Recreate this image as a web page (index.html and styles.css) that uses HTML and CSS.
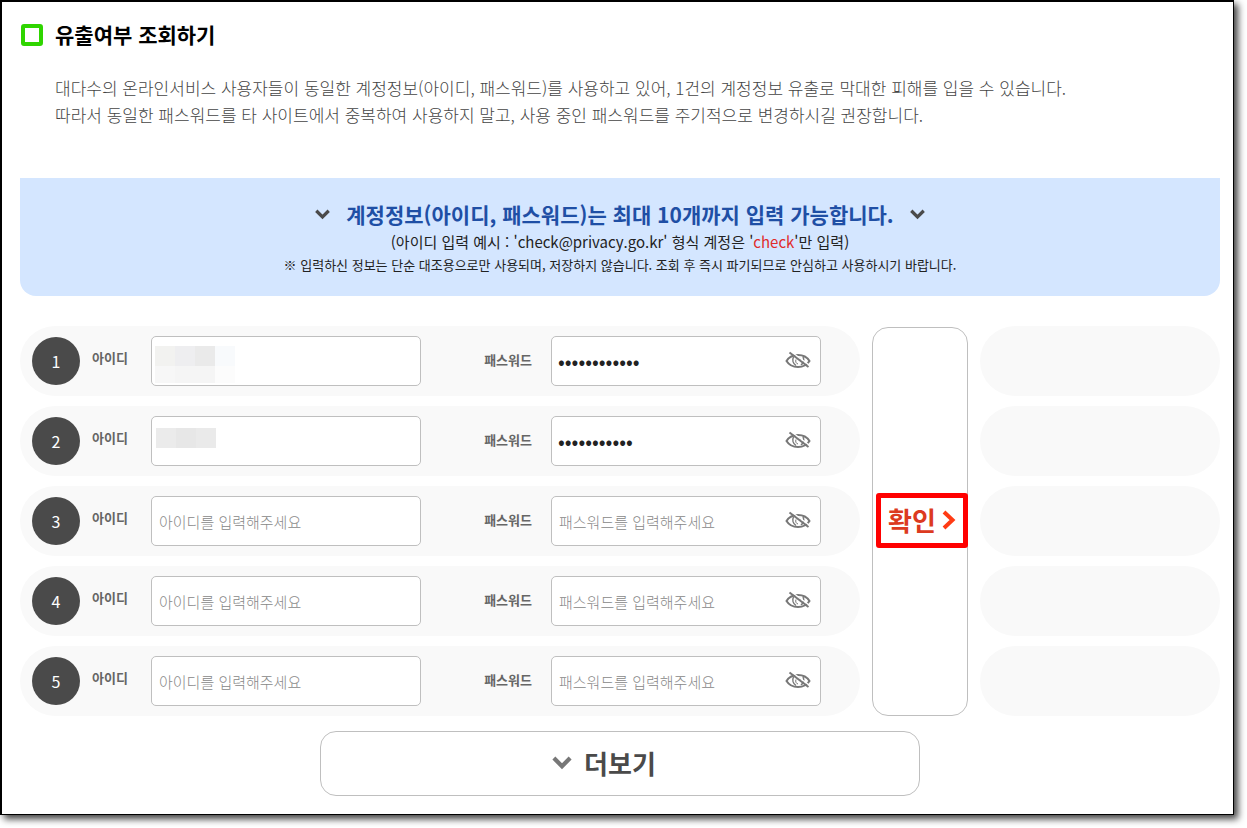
FILE: index.html
```html
<!DOCTYPE html>
<html lang="ko">
<head>
  <meta charset="UTF-8" />
  <meta name="viewport" content="width=device-width, initial-scale=1.0"/>
  <title>유출여부 조회하기</title>
  <link rel="stylesheet" href="styles.css">
</head>
<body>
  <!-- Shared icons -->
  <svg class="sprite" aria-hidden="true">
    <symbol id="eye-off" viewBox="0 0 26 20">
      <g fill="none" stroke="#777" stroke-width="2">
        <path d="M1.5 10C4 6 8 4 13 4s9 2 11.500 6C22 14 18 16 13 16S4 14 1.500 10z"/>
        <path d="M8.500 6c-1.500 3-.5 6.500 2.500 8.500M18 6c1.500 3 .5 6-2 8" stroke-width="1.500"/>
        <path d="M11 8.500c-.8 2 0 4 2 4.500M13.500 6.500c1.500 0 2.500 1 2.500 2.500" stroke-width="1"/>
        <path d="M6.500 1l19 14" stroke="#fff" stroke-width="1.500"/>
        <path d="M4.500 1.500l19 14.500"/>
      </g>
    </symbol>
    <symbol id="chevron" viewBox="0 0 14 10">
      <path d="M1.200 1.500L7 7.300l5.800-5.800" fill="none" stroke="currentColor" stroke-width="3"/>
    </symbol>
  </svg>

  <main class="page">
    <h1 class="title">유출여부 조회하기</h1>
    <p class="intro">대다수의 온라인서비스 사용자들이 동일한 계정정보(아이디, 패스워드)를 사용하고 있어, 1건의 계정정보 유출로 막대한 피해를 입을 수 있습니다.<br>
      따라서 동일한 패스워드를 타 사이트에서 중복하여 사용하지 말고, 사용 중인 패스워드를 주기적으로 변경하시길 권장합니다.</p>

    <section class="notice">
      <h2>
        <svg class="chevron"><use href="#chevron"/></svg>
        계정정보(아이디, 패스워드)는 최대 10개까지 입력 가능합니다.
        <svg class="chevron"><use href="#chevron"/></svg>
      </h2>
      <p class="example">(아이디 입력 예시 : 'check@privacy.go.kr' 형식 계정은 '<em>check</em>'만 입력)</p>
      <p class="small">※ 입력하신 정보는 단순 대조용으로만 사용되며, 저장하지 않습니다. 조회 후 즉시 파기되므로 안심하고 사용하시기 바랍니다.</p>
    </section>

    <form>
      <div class="check">
        <!-- Account rows -->
        <div class="rows">
          <div class="row">
            <span class="num">1</span>
            <label class="id-label" for="id1">아이디</label>
            <div class="field">
              <input type="text" id="id1">
              <svg class="mask" width="82" height="40" viewBox="0 0 82 40" aria-hidden="true">
                <rect x="1" width="20" height="20" fill="#f2f2f0"/>
                <rect x="21" width="20" height="20" fill="#eeeef0"/>
                <rect x="41" width="20" height="20" fill="#eaeaea"/>
                <rect x="61" width="20" height="20" fill="#f8fafc"/>
                <rect x="1" y="20" width="20" height="17" fill="#f7f7f7"/>
                <rect x="21" y="20" width="40" height="17" fill="#f5f5f5"/>
                <rect x="61" y="20" width="20" height="17" fill="#fcfcfc"/>
              </svg>
            </div>
            <label class="pw-label" for="pw1">패스워드</label>
            <div class="field">
              <input type="password" class="filled" id="pw1" value="abcdefghijkl">
              <button type="button" class="eye" aria-label="패스워드 표시"><svg><use href="#eye-off"/></svg></button>
            </div>
          </div>
          <div class="row">
            <span class="num">2</span>
            <label class="id-label" for="id2">아이디</label>
            <div class="field">
              <input type="text" id="id2">
              <svg class="mask" width="82" height="40" viewBox="0 0 82 40" aria-hidden="true">
                <rect x="2" y="2" width="20" height="20" fill="#ebebeb"/>
                <rect x="22" y="2" width="20" height="20" fill="#e7e7e7"/>
                <rect x="42" y="2" width="20" height="20" fill="#eaeaea"/>
              </svg>
            </div>
            <label class="pw-label" for="pw2">패스워드</label>
            <div class="field">
              <input type="password" class="filled" id="pw2" value="abcdefghijk">
              <button type="button" class="eye" aria-label="패스워드 표시"><svg><use href="#eye-off"/></svg></button>
            </div>
          </div>
          <div class="row">
            <span class="num">3</span>
            <label class="id-label" for="id3">아이디</label>
            <div class="field">
              <input type="text" id="id3" placeholder="아이디를 입력해주세요">
            </div>
            <label class="pw-label" for="pw3">패스워드</label>
            <div class="field">
              <input type="password" id="pw3" placeholder="패스워드를 입력해주세요">
              <button type="button" class="eye" aria-label="패스워드 표시"><svg><use href="#eye-off"/></svg></button>
            </div>
          </div>
          <div class="row">
            <span class="num">4</span>
            <label class="id-label" for="id4">아이디</label>
            <div class="field">
              <input type="text" id="id4" placeholder="아이디를 입력해주세요">
            </div>
            <label class="pw-label" for="pw4">패스워드</label>
            <div class="field">
              <input type="password" id="pw4" placeholder="패스워드를 입력해주세요">
              <button type="button" class="eye" aria-label="패스워드 표시"><svg><use href="#eye-off"/></svg></button>
            </div>
          </div>
          <div class="row">
            <span class="num">5</span>
            <label class="id-label" for="id5">아이디</label>
            <div class="field">
              <input type="text" id="id5" placeholder="아이디를 입력해주세요">
            </div>
            <label class="pw-label" for="pw5">패스워드</label>
            <div class="field">
              <input type="password" id="pw5" placeholder="패스워드를 입력해주세요">
              <button type="button" class="eye" aria-label="패스워드 표시"><svg><use href="#eye-off"/></svg></button>
            </div>
          </div>
        </div>

        <button type="submit" class="btn-submit">
          <span class="highlight">확인
            <svg viewBox="0 0 14 20"><path d="M2 2l8.500 8L2 18" fill="none" stroke="#ff3b14" stroke-width="4"/></svg>
          </span>
        </button>

        <!-- Results -->
        <div class="rows">
          <div class="result"></div>
          <div class="result"></div>
          <div class="result"></div>
          <div class="result"></div>
          <div class="result"></div>
        </div>
      </div>

      <button type="button" class="btn-more">
        <svg><use href="#chevron"/></svg>
        더보기
      </button>
    </form>
  </main>
</body>
</html>
```
FILE: styles.css
```css
* {
  box-sizing: border-box;
}

body {
  margin: 0;
  padding: 0 13px 12px 0;
  background: #fff;
  color: #222;
  font-family: "Noto Sans CJK KR", "Noto Sans", sans-serif;
}

h1, h2, p {
  margin: 0;
}

input, button {
  font-family: inherit;
}

.sprite {
  display: none;
}

.page {
  border: 1px solid #000;
  border-width: 2px 1px 1px 2px;
  padding: 16px 13px 18px 18px;
  background: #fff;
  box-shadow: 4px 4px 7px rgba(0,0,0,0.75);
}

.title {
  display: flex;
  align-items: center;
  gap: 12px;
  padding-left: 1px;
  font-size: 21px;
  line-height: 33px;
  color: #000;
}

.title::before {
  content: "";
  box-sizing: border-box;
  width: 22px;
  height: 22px;
  border: 4px solid #2fd500;
  border-radius: 3px;
}

.intro {
  margin: 23px 0 50px 35px;
  font-size: 17px;
  font-weight: 300;
  line-height: 27px;
  color: #444;
}

/* Blue notice */
.notice {
  padding: 20px 0;
  background: #d4e6ff;
  border-radius: 0 0 16px 16px;
  text-align: center;
}

.notice h2 {
  display: flex;
  justify-content: center;
  align-items: center;
  gap: 16px;
  font-size: 21px;
  line-height: 32px;
  color: #1f4fa5;
}

.chevron {
  width: 15px;
  height: 11px;
  color: #4a4a4a;
}

.example {
  font-size: 15px;
  line-height: 24px;
}

.example em {
  font-style: normal;
  color: #e02b2b;
}

.small {
  font-size: 13px;
  line-height: 22px;
}

/* Form */
.check {
  display: grid;
  grid-template-columns: 1fr 96px 240px;
  gap: 12px;
  margin-top: 30px;
}

.rows {
  display: grid;
  gap: 10px;
}

.row, .result {
  height: 70px;
  border-radius: 35px;
  background: #f9f9f9;
}

.row {
  display: grid;
  grid-template-columns: 48px 47px 1fr 106px 1fr;
  gap: 12px;
  align-items: center;
  padding: 0 39px 0 12px;
}

.num {
  height: 48px;
  border-radius: 50%;
  background: #4a4a4a;
  color: #fff;
  font-size: 16px;
  line-height: 48px;
  text-align: center;
}

label {
  font-size: 13px;
  font-weight: bold;
  line-height: 20px;
  color: #666;
}

.id-label {
  padding-bottom: 6px;
}

.pw-label {
  padding: 0 7px 2px 0;
  text-align: right;
}

.field {
  position: relative;
}

.field input {
  display: block;
  width: 100%;
  height: 50px;
  padding: 0 7px;
  border: 1px solid #bfbfbf;
  border-radius: 5px;
  background: #fff;
  color: #222;
  font-size: 15px;
}

.field .filled {
  padding: 0 6px 2px;
  font-size: 20px;
}

.field input::placeholder {
  font-weight: 300;
  color: #888;
}

.mask {
  position: absolute;
  left: 3px;
  top: 10px;
}

.eye {
  position: absolute;
  right: 10px;
  top: 15px;
  padding: 0;
  border: 0;
  background: none;
  cursor: pointer;
}

.eye svg {
  display: block;
  width: 26px;
  height: 20px;
}

.btn-submit, .btn-more {
  border: 1px solid #bfbfbf;
  border-radius: 16px;
  background: #fff;
  cursor: pointer;
}

.btn-submit {
  margin-top: 1px;
  padding: 0 0 2px 3px;
  color: #dc3a20;
}

.highlight {
  display: flex;
  justify-content: center;
  align-items: center;
  gap: 6px;
  height: 55px;
  margin-right: -1px;
  border: 5px solid #f00;
  border-radius: 3px;
  padding-bottom: 2px;
  font-size: 26px;
  font-weight: bold;
}

.highlight svg {
  width: 14px;
  height: 20px;
}

.btn-more {
  display: flex;
  justify-content: center;
  align-items: center;
  gap: 12px;
  width: 50%;
  height: 65px;
  margin: 15px auto 0;
  padding: 0 32px 2px 0;
  font-size: 26px;
  font-weight: bold;
  color: #4a4a4a;
}

.btn-more svg {
  width: 20px;
  height: 14px;
  color: #777;
}
```
